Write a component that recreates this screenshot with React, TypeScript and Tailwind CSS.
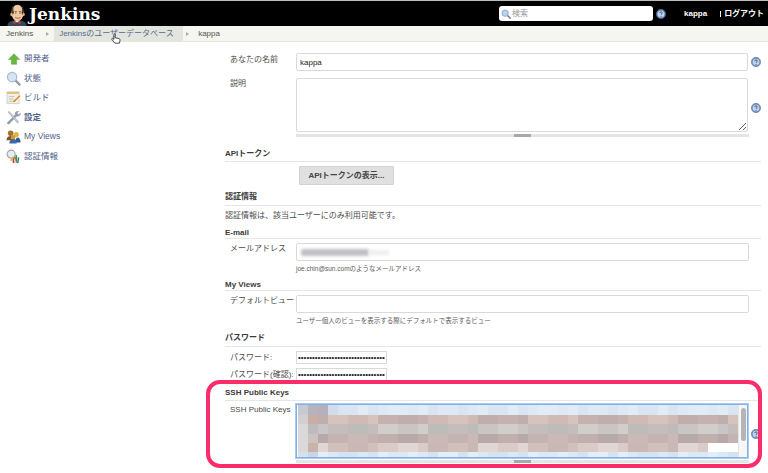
import type { ReactNode } from "react";

const font = "font-['Liberation_Sans','Noto_Sans_CJK_JP',sans-serif]";

function HelpIcon() {
  return (
    <svg viewBox="0 0 12 12" className="w-[10px] h-[10px] shrink-0">
      <circle cx="6" cy="6" r="5.6" fill="#6f8fbd" stroke="#4a6a9a" strokeWidth="0.6" />
      <circle cx="6" cy="6" r="4" fill="#c3d4e8" />
      <path d="M4.500 4.900c0-1 .7-1.500 1.500-1.500s1.500.5 1.500 1.300c0 1.100-1.400 1.100-1.400 2.300" fill="none" stroke="#27497c" strokeWidth="1" />
      <circle cx="6.100" cy="8.700" r="0.650" fill="#27497c" />
    </svg>
  );
}

function Butler() {
  return (
    <svg viewBox="0 0 20 22" className="w-[20px] h-[22px] shrink-0">
      <path d="M0.500 22c0-4 3-5.500 9.500-5.500s9.500 1.500 9.500 5.500z" fill="#34465c" />
      <path d="M7 16.500h6l-3 2z" fill="#f4f4f4" />
      <path d="M6.500 17l3.500 1.500L13.500 17v3l-3.500-1.200L6.500 20z" fill="#d33833" />
      <ellipse cx="10.500" cy="9" rx="6" ry="8.300" fill="#efc7a2" />
      <path d="M4.500 10C3.800 5 5 2 7 1.200c-.8 2-1 5 0 7.300L5.800 11z" fill="#4a3a32" />
      <path d="M16.500 10c.6-4-.2-6.500-2-8 .6 2 .8 4.800 0 7l1 2z" fill="#4a3a32" />
      <ellipse cx="4.500" cy="10.500" rx="1.200" ry="1.800" fill="#e3b28c" />
      <ellipse cx="16.700" cy="10.500" rx="1" ry="1.700" fill="#e3b28c" />
      <path d="M7.600 7.600h2.200M11.800 7.600h2.200" stroke="#4a3a32" strokeWidth="0.700" />
      <circle cx="8.800" cy="9" r="0.600" fill="#222" />
      <circle cx="13" cy="9" r="0.600" fill="#222" />
      <path d="M8 13.500c1.500 1 4 1 5.500 0" fill="none" stroke="#8a5236" strokeWidth="0.800" />
    </svg>
  );
}

const sideIcons: Record<string, ReactNode> = {
  up: (
    <svg viewBox="0 0 16 16" className="w-[14px] h-[14px]">
      <path d="M8 2 14.500 8.500H11V14H5V8.500H1.500z" fill="#6ab544" stroke="#559e33" strokeWidth="0.500" />
    </svg>
  ),
  search: (
    <svg viewBox="0 0 16 16" className="w-[15px] h-[15px]">
      <path d="M10 10l4.500 4.500" stroke="#9a9a9a" strokeWidth="2.400" strokeLinecap="round" />
      <circle cx="6.500" cy="6.500" r="5" fill="#d6e5f5" stroke="#aabcd2" strokeWidth="1.300" />
    </svg>
  ),
  build: (
    <svg viewBox="0 0 16 16" className="w-[15px] h-[15px]">
      <path d="M1 2h13v12.500H1z" fill="#f4f1e4" stroke="#aaa" strokeWidth="0.500" />
      <path d="M1 2h13v2.200H1z" fill="#d9c47a" />
      <path d="M3 7h6M3 9.500h5M3 12h7" stroke="#aaa" strokeWidth="0.700" />
      <path d="M8 11.500 14.500 5.500l1 1L9.500 12.500l-2 .5z" fill="#d98b2b" />
    </svg>
  ),
  tools: (
    <svg viewBox="0 0 16 16" className="w-[15px] h-[15px]">
      <path d="M2.500 14 11 5.500" stroke="#8f9db0" strokeWidth="2.600" strokeLinecap="round" />
      <path d="M9.500 4.500a3.200 3.200 0 0 1 4.500-3.200l-2 2 1.500 1.500 2-2a3.200 3.200 0 0 1-4.500 3.700z" fill="#8f9db0" />
      <path d="M2 2l1.500-.5L13.500 12.500l-1.200 1.500z" fill="#c0c8d2" stroke="#8a94a3" strokeWidth="0.400" />
    </svg>
  ),
  people: (
    <svg viewBox="0 0 16 16" className="w-[15px] h-[15px]">
      <circle cx="5" cy="4.500" r="3" fill="#a5752b" />
      <path d="M.5 12c0-3 2-4.500 4.500-4.500S9.500 9 9.500 12z" fill="#7d5620" />
      <circle cx="11" cy="6" r="2.700" fill="#e5b33c" />
      <path d="M9.500 14.500c0-3 1.500-5.500 3-5.500s3 1.500 3 5.500z" fill="#2f5a9c" />
      <circle cx="7.500" cy="9" r="2.500" fill="#c99a45" />
      <path d="M3.500 15.500c0-3 1.800-4.500 4-4.500s4 1.500 4 4.500z" fill="#3f68a8" />
    </svg>
  ),
  cred: (
    <svg viewBox="0 0 16 16" className="w-[15px] h-[15px]">
      <circle cx="5.500" cy="5.500" r="4.300" fill="#e4ecf4" stroke="#a5a5a5" strokeWidth="1.200" />
      <path d="M8.500 8.500l2.500 2.500" stroke="#888" strokeWidth="1.800" />
      <path d="M8 9v6" stroke="#d33833" strokeWidth="1.800" />
      <path d="M11 6.500v8" stroke="#3d9a3d" strokeWidth="1.800" />
      <path d="M5 12.500l3-4" stroke="#e5b33c" strokeWidth="1.800" />
      <path d="M13.500 9l-1 6" stroke="#3f68a8" strokeWidth="1.500" />
    </svg>
  ),
};

const sideItems = [
  { icon: "up", label: "開発者" },
  { icon: "search", label: "状態" },
  { icon: "build", label: "ビルド" },
  { icon: "tools", label: "設定", bold: true },
  { icon: "people", label: "My Views" },
  { icon: "cred", label: "認証情報" },
];

function Heading({ children, className }: { children: ReactNode; className?: string }) {
  return (
    <div className={`h-[15px] border-b border-[#e6e6e6] flex items-center text-[8px] font-bold text-[#3a3a3a] ${className ?? ""}`}>
      {children}
    </div>
  );
}

function Label({ children, className }: { children: ReactNode; className?: string }) {
  return <div className={`w-[71px] pl-[5px] shrink-0 text-[8px] leading-[12px] text-[#4c4c4c] whitespace-nowrap ${className ?? ""}`}>{children}</div>;
}

function Hint({ children }: { children: ReactNode }) {
  return <div className="ml-[71px] h-[10px] mt-[3px] text-[6.5px] leading-[10px] text-[#5a5a5a]">{children}</div>;
}

function Grip({ className }: { className?: string }) {
  return (
    <div className={`ml-[71px] w-[453px] h-[3px] bg-[#e4e4e4] flex justify-center ${className ?? ""}`}>
      <div className="w-[17px] h-[3px] bg-[#a9a9a9]" />
    </div>
  );
}

const inputBox = "border border-[#d9d9d9] rounded-[2px] bg-white outline-none text-[8px] text-[#222]";

// blurred key text, one colour set per row
const mosaicRows = [
  { colors: ["#dfe9f5", "#e2ecf7", "#d9e5f2"], start: ["#c9c9d3", "#b7b3bc", "#b5b1ba", "#d2dcea"], end: 0 },
  { colors: ["#cfbab6", "#c5b1ad", "#d6c3be", "#bfaeab"], start: ["#d2cfd3", "#c9aea6"], end: 0 },
  { colors: ["#c8c5c4", "#bebbbb", "#d0cdcb", "#c4bdbc"], start: ["#d9d9dc", "#bdbbbb"], end: 0 },
  { colors: ["#c3b3b2", "#b8a9a9", "#cabab7", "#bfb0ae"], start: ["#dbd8da", "#cdc2c2"], end: 0 },
  { colors: ["#dbcbc7", "#d2c0bb", "#e2d6d3", "#c9b8b4"], start: ["#dcd8da", "#c9b2a9"], end: 3 },
  { colors: ["#dce8f4", "#d5e2ef", "#e3eef9"], start: ["#d8e1eb", "#c8d5e2"], end: 0 },
];
const rowHeights = ["h-[10px]", "h-[10px]", "h-[10px]", "h-[9px]", "h-[10px]", "h-[5px]"];

function Mosaic() {
  return (
    <div className="flex-1 min-w-0 flex flex-col">
      {mosaicRows.map((row, r) => (
        <div key={r} className={`flex ${rowHeights[r]}`}>
          {Array.from({ length: 44 }, (_, c) => {
            const n = (c * 7 + r * 13 + ((c * c) % 5)) % row.colors.length;
            const color = c < row.start.length ? row.start[c] : c >= 44 - row.end ? "#ffffff" : row.colors[n];
            return <div key={c} className="w-[10px] shrink-0" style={{ backgroundColor: color }} />;
          })}
        </div>
      ))}
    </div>
  );
}

export default function App() {
  return (
    <div className={`${font} relative w-[768px] h-[473px] overflow-hidden bg-white`}>
      <div className="h-[26px] bg-black border-t border-[#bdbdbd] flex items-center">
        <div className="ml-[7px] flex items-end self-end gap-[2px] w-[492px]">
          <Butler />
          <span className="font-['DejaVu_Serif',serif] font-bold text-[17px] leading-[23px] text-white">Jenkins</span>
        </div>
        <div className="w-[154px] h-[15px] rounded-[3px] bg-white flex items-center pl-[2px] gap-[1px]">
          <svg viewBox="0 0 12 12" className="w-[10px] h-[10px]">
            <path d="M7.500 7.500 11 11" stroke="#777" strokeWidth="1.800" strokeLinecap="round" />
            <circle cx="5" cy="5" r="3.800" fill="#bcd3ec" stroke="#7f9fc4" />
          </svg>
          <span className="text-[8px] text-[#999]">検索</span>
        </div>
        <div className="ml-[3px]"><HelpIcon /></div>
        <span className="ml-[18px] text-[8px] font-bold text-white">kappa</span>
        <span className="ml-[13px] w-[1px] h-[6px] bg-white" />
        <span className="ml-[3px] text-[8px] font-bold text-white">ログアウト</span>
      </div>

      <div className="h-[16px] bg-[#f4f6ef] border-b border-[#e6e6dc] flex items-center text-[8px] text-[#555]">
        <span className="ml-[6px]">Jenkins</span>
        <span className="ml-[13px] w-0 h-0 border-y-[2px] border-l-[3px] border-y-transparent border-l-[#aaa]" />
        <span className="ml-[5px] h-[15px] w-[129px] pl-[5px] bg-[#e2e5de] text-[#56698c] flex items-center">Jenkinsのユーザーデータベース</span>
        <span className="ml-[3px] w-0 h-0 border-y-[2px] border-l-[3px] border-y-transparent border-l-[#aaa]" />
        <span className="ml-[9px]">kappa</span>
      </div>

      <div className="flex">
        <div className="w-[225px] shrink-0 pt-[7px] pl-[6px]">
          {sideItems.map((item) => (
            <div key={item.label} className="h-[19.5px] flex items-center gap-[3px]">
              <span className="w-[15px] flex justify-center">{sideIcons[item.icon]}</span>
              <span className={`text-[8.5px] text-[#4f6288] ${item.bold ? "font-bold" : ""}`}>{item.label}</span>
            </div>
          ))}
        </div>

        <div className="w-[536px] pt-[11px]">
          <div className="flex items-start">
            <Label className="mt-[1px]">あなたの名前</Label>
            <input readOnly value="kappa" className={`${inputBox} w-[453px] h-[18px] px-[3px]`} />
            <span className="ml-[3px] mt-[4px]"><HelpIcon /></span>
          </div>
          <div className="flex items-start mt-[7px]">
            <Label>説明</Label>
            <textarea readOnly className={`${inputBox} w-[453px] h-[54px] resize-y`} />
            <span className="ml-[3px] mt-[25px]"><HelpIcon /></span>
          </div>
          <Grip className="mt-[2px]" />

          <Heading className="mt-[10px]">APIトークン</Heading>
          <button className="block ml-[74px] mt-[4px] w-[95px] h-[19px] bg-[#e0e0e0] border border-[#d2d2d2] rounded-[1px] text-[8px] font-bold text-[#444]">
            APIトークンの表示...
          </button>

          <Heading className="mt-[6px] pb-[2px]">認証情報</Heading>
          <div className="mt-[4px] h-[12px] text-[8px] leading-[12px] text-[#4c4c4c]">認証情報は、該当ユーザーにのみ利用可能です。</div>

          <Heading className="mt-[2px] pt-[3px]">E-mail</Heading>
          <div className="flex items-start mt-[4px]">
            <Label>メールアドレス</Label>
            <div className={`${inputBox} w-[453px] h-[18px] flex items-center pl-[4px]`}>
              <div className="w-[68px] h-[7px] rounded-[2px] bg-[#c0c0c4] blur-[1.5px]" />
              <div className="w-[20px] h-[5px] bg-[#eeeeee] blur-[1.5px]" />
            </div>
          </div>
          <Hint>joe.chin@sun.comのようなメールアドレス</Hint>

          <Heading className="mt-[2px] pt-[3px]">My Views</Heading>
          <div className="flex items-start mt-[4px]">
            <Label>デフォルトビュー</Label>
            <input readOnly className={`${inputBox} w-[453px] h-[18px]`} />
          </div>
          <Hint>ユーザー個人のビューを表示する際にデフォルトで表示するビュー</Hint>

          <Heading className="mt-[6px] pb-[2px]">パスワード</Heading>
          <div className="flex items-center mt-[4px]">
            <Label>パスワード:</Label>
            <input readOnly type="password" value="passwordpasswordpasswordpasswordpassw" className={`${inputBox} rounded-none w-[91px] h-[13px] px-[1px] text-[5px]`} />
          </div>
          <div className="flex items-center mt-[4px]">
            <Label>パスワード(確認):</Label>
            <input readOnly type="password" value="passwordpasswordpasswordpasswordpassw" className={`${inputBox} rounded-none w-[91px] h-[13px] px-[1px] text-[5px]`} />
          </div>

          <Heading className="mt-[5px]">SSH Public Keys</Heading>
          <div className="flex items-start mt-[3px]">
            <Label>SSH Public Keys</Label>
            <div className="w-[453px] h-[54px] border border-[#7fb0ea] shadow-[0_0_0_1px_#a9ccf3] flex pl-[1px] bg-white">
              <Mosaic />
              <div className="w-[9px] shrink-0 bg-[#f6f6f6] border-l border-[#e4e4e4] flex justify-center pt-[3px]">
                <div className="w-[5px] h-[33px] rounded-full bg-[#b5b5b5]" />
              </div>
            </div>
            <span className="ml-[3px] mt-[25px]"><HelpIcon /></span>
          </div>
          <Grip className="mt-[2px]" />
        </div>
      </div>

      {/* annotation drawn over the screenshot */}
      <div className="absolute left-[206px] top-[380px] w-[556px] h-[88px] border-[4px] border-[#fb2c6a] rounded-[14px]" />
      <svg viewBox="0 0 12 14" className="absolute left-[111px] top-[33px] w-[10px] h-[12px]">
        <path d="M3.500 1.500c0-1 1.500-1 1.500 0v4l4.500 1c1 .3 1.500 1 1.300 2l-.6 3.500H4.500L1 7.500c-.5-.8.5-1.700 1.300-1l1.200 1z" fill="#fff" stroke="#111" strokeWidth="0.900" />
      </svg>
    </div>
  );
}
